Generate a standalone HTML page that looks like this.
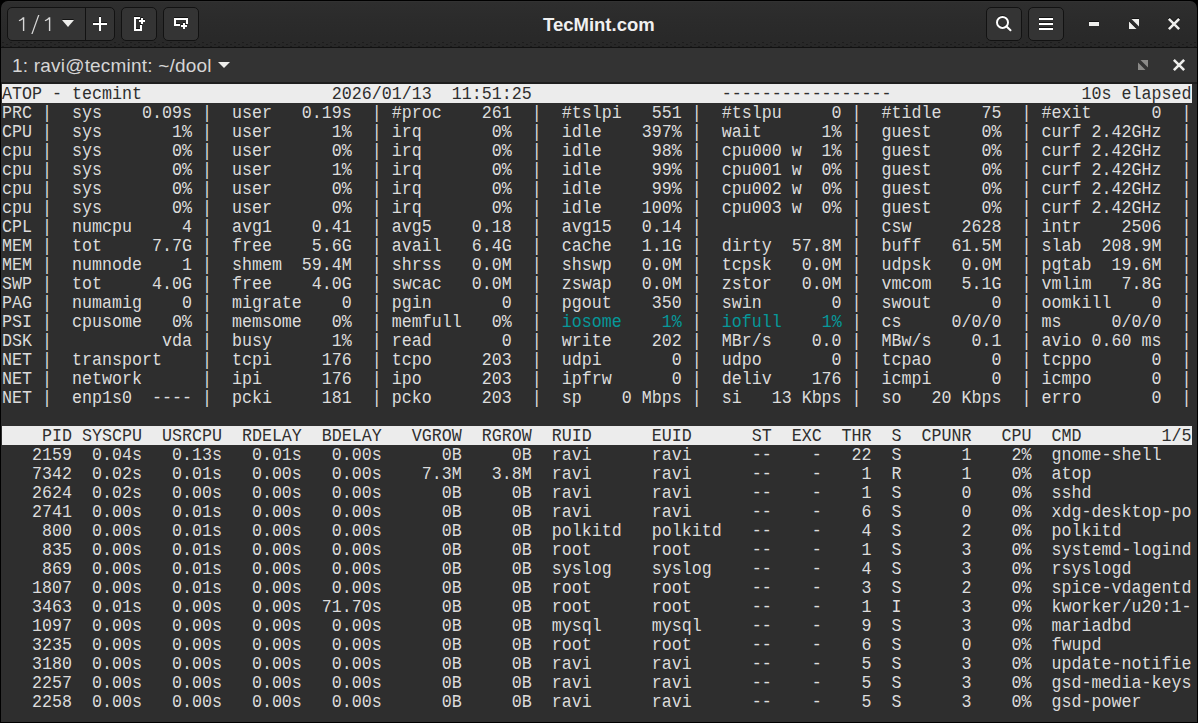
<!DOCTYPE html>
<html><head><meta charset="utf-8">
<style>
html,body{margin:0;padding:0;background:#000;width:1198px;height:723px;overflow:hidden;position:relative;}
.a{position:absolute;}
.win{position:absolute;left:1px;top:1px;width:1196px;height:721px;background:#2e2e2e;border-radius:7px 7px 0 0;overflow:hidden;}
.title{left:1px;top:1px;width:1196px;height:46px;background:linear-gradient(#363636 0px,#2e2e2e 1px,#2b2b2b 20px,#282828 46px);border-radius:7px 7px 0 0;}
.btn{position:absolute;top:7px;height:34px;box-sizing:border-box;background:#343434;border:1px solid #121212;border-radius:5px;}
.sess{left:1px;top:48px;width:1196px;height:34px;background:#333;}
.term{left:1px;top:84px;width:1196px;height:638px;background:#2e2e2e;}
.r{position:absolute;left:1px;width:1190px;height:19px;font-family:"Liberation Mono",monospace;font-size:16.667px;line-height:19px;color:#dcdcdc;white-space:pre;}
.r .t{display:block;position:relative;top:1px;transform:scaleY(1.09);transform-origin:0 15px;}
.inv{background:#ececec;color:#2e2e2e;}
.cy{color:#06989a;}
.sans{font-family:"Liberation Sans",sans-serif;}
</style></head><body>
<div class="a title"></div>
<div class="a" style="left:1px;top:41px;width:1196px;height:6px;background-image:radial-gradient(circle at 2px 1.5px,rgba(0,0,0,0.3) 0.7px,transparent 1.1px),radial-gradient(circle at 6px 3.5px,rgba(0,0,0,0.3) 0.7px,transparent 1.1px);background-size:8px 4px;"></div>
<div class="a" style="left:1px;top:47px;width:1196px;height:1px;background:#111"></div>
<div class="btn" style="left:7px;width:108px;"></div>
<div class="a" style="left:85px;top:8px;width:1px;height:32px;background:#121212"></div>
<div class="btn" style="left:121px;width:36px;"></div>
<div class="btn" style="left:163px;width:36px;"></div>
<div class="btn" style="left:986px;width:36px;"></div>
<div class="btn" style="left:1028px;width:36px;"></div>
<div class="a sans" style="left:543px;top:13px;font-size:18.5px;line-height:24px;font-weight:bold;color:#f0f0f0">TecMint.com</div>
<div class="a sess"></div>
<div class="a" style="left:1px;top:82px;width:1196px;height:2px;background:#1e1e1e"></div>
<div class="a sans" style="left:12px;top:54px;font-size:19px;line-height:24px;letter-spacing:0.2px;color:#d6d6d6">1: ravi@tecmint: ~/dool</div>
<svg class="a" style="left:0;top:0" width="1198" height="90">
  <g fill="#111" opacity="0.9">
    <polygon points="62,19 74,19 68,26"/>
    <rect x="93" y="22" width="14" height="2"/><rect x="99" y="16" width="2" height="14"/>
    <rect x="1039" y="17" width="14" height="2"/><rect x="1039" y="22" width="14" height="2"/><rect x="1039" y="27" width="14" height="2"/>
    <path d="M134,16 H140 V18 H136 V28 H140 V24 H142 V30 H134 Z"/>
    <rect x="139" y="19" width="6" height="2"/><rect x="141" y="17" width="2" height="6"/>
    <path d="M174,17 H188 V23 H186 V19 H176 V23 H180 V25 H174 Z"/>
    <rect x="181" y="24" width="6" height="2"/><rect x="183" y="22" width="2" height="6"/>
    <rect x="1089" y="21" width="10" height="4"/>
    <polygon points="1131.5,18 1139,18 1139,25.5"/><polygon points="1129,20.5 1129,28 1136.5,28"/>
  </g>
  <circle cx="1002.5" cy="21.6" r="5.5" fill="none" stroke="#111" stroke-width="2" opacity="0.8"/>
  <path d="M1169.8,18.8 L1178.2,27.2 M1178.2,18.8 L1169.8,27.2" stroke="#111" stroke-width="2.8" stroke-linecap="square" opacity="0.8"/>
  <!-- 1 / 1 -->
  <g fill="#d8d8d8">
    <path d="M22.9,17.3 L24.3,17.3 L24.3,31 L22.9,31 L22.9,19.3 Q21.2,20.6 19,21.3 L18.8,20.2 Q21.2,19.3 22.9,17.3Z"/>
    <path d="M38.1,15 L39.4,15 L32.6,34 L31.3,34Z"/>
    <path d="M48.9,17.3 L50.3,17.3 L50.3,31 L48.9,31 L48.9,19.3 Q47.2,20.6 45,21.3 L44.8,20.2 Q47.2,19.3 48.9,17.3Z"/>
  </g>
  <polygon points="62,20 74,20 68,27" fill="#eeeeec"/>
  <rect x="93" y="23" width="14" height="2" fill="#fff"/><rect x="99" y="17" width="2" height="14" fill="#fff"/>
  <!-- split icon 1 -->
  <g fill="#fff">
    <path d="M134,17 H140 V19 H136 V29 H140 V25 H142 V31 H134 Z"/>
    <rect x="139" y="20" width="6" height="2"/><rect x="141" y="18" width="2" height="6"/>
  </g>
  <!-- split icon 2 -->
  <g fill="#fff">
    <path d="M174,18 H188 V24 H186 V20 H176 V24 H180 V26 H174 Z"/>
    <rect x="181" y="25" width="6" height="2"/><rect x="183" y="23" width="2" height="6"/>
  </g>
  <!-- search -->
  <circle cx="1002.5" cy="22.4" r="5.5" fill="none" stroke="#fff" stroke-width="2"/>
  <line x1="1006.6" y1="26.5" x2="1010.5" y2="30.3" stroke="#fff" stroke-width="2" stroke-linecap="round"/>
  <!-- menu -->
  <rect x="1039" y="18" width="14" height="2" fill="#fff"/><rect x="1039" y="23" width="14" height="2" fill="#fff"/><rect x="1039" y="28" width="14" height="2" fill="#fff"/>
  <!-- minimize -->
  <rect x="1089" y="22" width="10" height="4" fill="#eeeeec"/>
  <!-- maximize -->
  <polygon points="1131.5,19 1139,19 1139,26.5" fill="#eeeeec"/>
  <polygon points="1129,21.5 1129,29 1136.5,29" fill="#eeeeec"/>
  <!-- close -->
  <path d="M1169.8,19.8 L1178.2,28.2 M1178.2,19.8 L1169.8,28.2" stroke="#eeeeec" stroke-width="2.6" stroke-linecap="square"/>
  <!-- session dropdown -->
  <polygon points="218,62 230,62 224,68" fill="#eeeeec"/>
  <!-- session maximize gray -->
  <polygon points="1140.5,60 1148,60 1148,67.5" fill="#8b8a88"/>
  <polygon points="1138,62.5 1138,70 1145.5,70" fill="#8b8a88"/>
  <!-- session close -->
  <path d="M1174.8,60.8 L1183.2,69.2 M1183.2,60.8 L1174.8,69.2" stroke="#eeeeec" stroke-width="2.6" stroke-linecap="square"/>
</svg>
<div class="a term">
<div class="r inv" style="top:0px"><span class="t">ATOP - tecmint                   2026/01/13  11:51:25                   -----------------                   10s elapsed</span></div>
<div class="r" style="top:19px"><span class="t">PRC |  sys    0.09s |  user   0.19s  | #proc    261  |  #tslpi   551 |  #tslpu     0 |  #tidle    75  | #exit      0  |</span></div>
<div class="r" style="top:38px"><span class="t">CPU |  sys       1% |  user      1%  | irq       0%  |  idle    397% |  wait      1% |  guest     0%  | curf 2.42GHz  |</span></div>
<div class="r" style="top:57px"><span class="t">cpu |  sys       0% |  user      0%  | irq       0%  |  idle     98% |  cpu000 w  1% |  guest     0%  | curf 2.42GHz  |</span></div>
<div class="r" style="top:76px"><span class="t">cpu |  sys       0% |  user      1%  | irq       0%  |  idle     99% |  cpu001 w  0% |  guest     0%  | curf 2.42GHz  |</span></div>
<div class="r" style="top:95px"><span class="t">cpu |  sys       0% |  user      0%  | irq       0%  |  idle     99% |  cpu002 w  0% |  guest     0%  | curf 2.42GHz  |</span></div>
<div class="r" style="top:114px"><span class="t">cpu |  sys       0% |  user      0%  | irq       0%  |  idle    100% |  cpu003 w  0% |  guest     0%  | curf 2.42GHz  |</span></div>
<div class="r" style="top:133px"><span class="t">CPL |  numcpu     4 |  avg1    0.41  | avg5    0.18  |  avg15   0.14 |               |  csw     2628  | intr    2506  |</span></div>
<div class="r" style="top:152px"><span class="t">MEM |  tot     7.7G |  free    5.6G  | avail   6.4G  |  cache   1.1G |  dirty  57.8M |  buff   61.5M  | slab  208.9M  |</span></div>
<div class="r" style="top:171px"><span class="t">MEM |  numnode    1 |  shmem  59.4M  | shrss   0.0M  |  shswp   0.0M |  tcpsk   0.0M |  udpsk   0.0M  | pgtab  19.6M  |</span></div>
<div class="r" style="top:190px"><span class="t">SWP |  tot     4.0G |  free    4.0G  | swcac   0.0M  |  zswap   0.0M |  zstor   0.0M |  vmcom   5.1G  | vmlim   7.8G  |</span></div>
<div class="r" style="top:209px"><span class="t">PAG |  numamig    0 |  migrate    0  | pgin       0  |  pgout    350 |  swin       0 |  swout      0  | oomkill    0  |</span></div>
<div class="r" style="top:228px"><span class="t">PSI |  cpusome   0% |  memsome   0%  | memfull   0%  |  <span class="cy">iosome    1%</span> |  <span class="cy">iofull    1%</span> |  cs     0/0/0  | ms     0/0/0  |</span></div>
<div class="r" style="top:247px"><span class="t">DSK |           vda |  busy      1%  | read       0  |  write    202 |  MBr/s    0.0 |  MBw/s    0.1  | avio 0.60 ms  |</span></div>
<div class="r" style="top:266px"><span class="t">NET |  transport    |  tcpi     176  | tcpo     203  |  udpi       0 |  udpo       0 |  tcpao      0  | tcppo      0  |</span></div>
<div class="r" style="top:285px"><span class="t">NET |  network      |  ipi      176  | ipo      203  |  ipfrw      0 |  deliv    176 |  icmpi      0  | icmpo      0  |</span></div>
<div class="r" style="top:304px"><span class="t">NET |  enp1s0  ---- |  pcki     181  | pcko     203  |  sp    0 Mbps |  si   13 Kbps |  so   20 Kbps  | erro       0  |</span></div>
<div class="r" style="top:323px"><span class="t"></span></div>
<div class="r inv" style="top:342px"><span class="t">    PID SYSCPU  USRCPU  RDELAY  BDELAY   VGROW  RGROW  RUID      EUID      ST  EXC  THR  S  CPUNR   CPU  CMD        1/5</span></div>
<div class="r" style="top:361px"><span class="t">   2159  0.04s   0.13s   0.01s   0.00s      0B     0B  ravi      ravi      --    -   22  S      1    2%  gnome-shell   </span></div>
<div class="r" style="top:380px"><span class="t">   7342  0.02s   0.01s   0.00s   0.00s    7.3M   3.8M  ravi      ravi      --    -    1  R      1    0%  atop          </span></div>
<div class="r" style="top:399px"><span class="t">   2624  0.02s   0.00s   0.00s   0.00s      0B     0B  ravi      ravi      --    -    1  S      0    0%  sshd          </span></div>
<div class="r" style="top:418px"><span class="t">   2741  0.00s   0.01s   0.00s   0.00s      0B     0B  ravi      ravi      --    -    6  S      0    0%  xdg-desktop-po</span></div>
<div class="r" style="top:437px"><span class="t">    800  0.00s   0.01s   0.00s   0.00s      0B     0B  polkitd   polkitd   --    -    4  S      2    0%  polkitd       </span></div>
<div class="r" style="top:456px"><span class="t">    835  0.00s   0.01s   0.00s   0.00s      0B     0B  root      root      --    -    1  S      3    0%  systemd-logind</span></div>
<div class="r" style="top:475px"><span class="t">    869  0.00s   0.01s   0.00s   0.00s      0B     0B  syslog    syslog    --    -    4  S      3    0%  rsyslogd      </span></div>
<div class="r" style="top:494px"><span class="t">   1807  0.00s   0.01s   0.00s   0.00s      0B     0B  root      root      --    -    3  S      2    0%  spice-vdagentd</span></div>
<div class="r" style="top:513px"><span class="t">   3463  0.01s   0.00s   0.00s  71.70s      0B     0B  root      root      --    -    1  I      3    0%  kworker/u20:1-</span></div>
<div class="r" style="top:532px"><span class="t">   1097  0.00s   0.00s   0.00s   0.00s      0B     0B  mysql     mysql     --    -    9  S      3    0%  mariadbd      </span></div>
<div class="r" style="top:551px"><span class="t">   3235  0.00s   0.00s   0.00s   0.00s      0B     0B  root      root      --    -    6  S      0    0%  fwupd         </span></div>
<div class="r" style="top:570px"><span class="t">   3180  0.00s   0.00s   0.00s   0.00s      0B     0B  ravi      ravi      --    -    5  S      3    0%  update-notifie</span></div>
<div class="r" style="top:589px"><span class="t">   2257  0.00s   0.00s   0.00s   0.00s      0B     0B  ravi      ravi      --    -    5  S      3    0%  gsd-media-keys</span></div>
<div class="r" style="top:608px"><span class="t">   2258  0.00s   0.00s   0.00s   0.00s      0B     0B  ravi      ravi      --    -    5  S      3    0%  gsd-power     </span></div>
</div>
</body></html>
